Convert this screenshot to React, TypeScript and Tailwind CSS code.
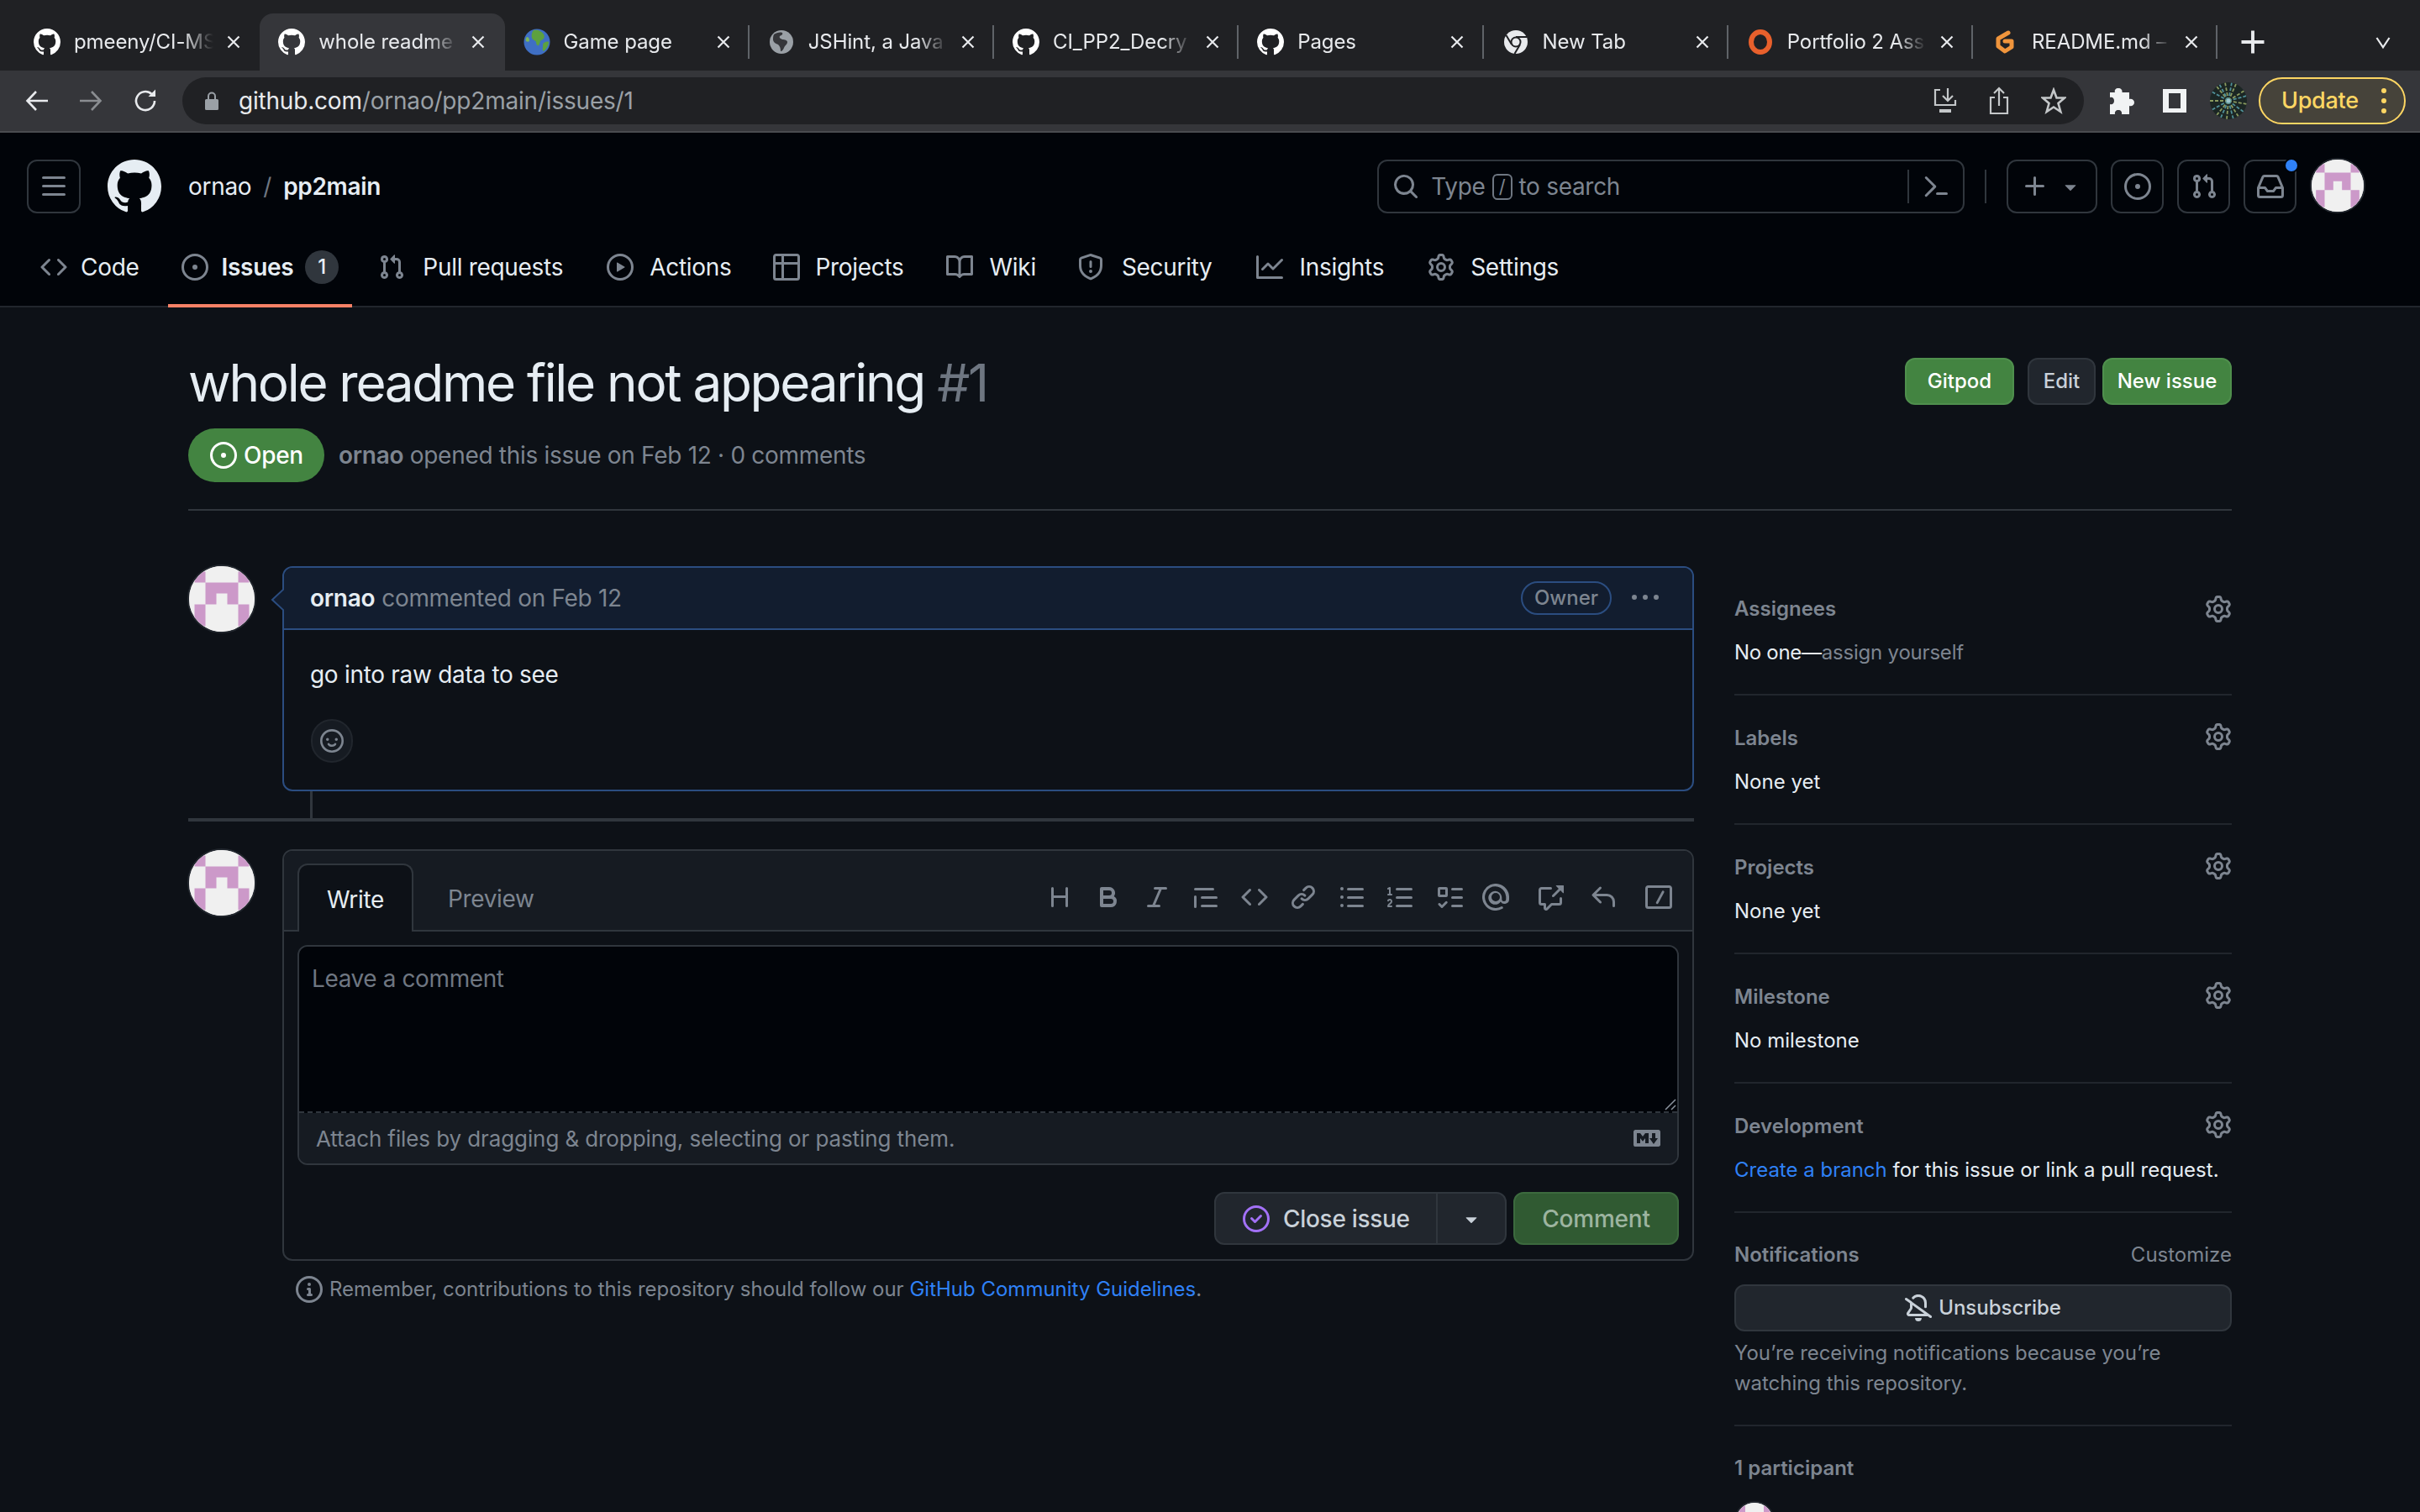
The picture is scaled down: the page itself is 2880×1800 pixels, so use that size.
import React from 'react';

// octicon paths, all on a 16x16 box
const paths: Record<string, string> = {
  github: 'M8 0c4.42 0 8 3.58 8 8a8.013 8.013 0 0 1-5.45 7.59c-.4.08-.55-.17-.55-.38 0-.27.01-1.13.01-2.2 0-.75-.25-1.23-.54-1.48 1.78-.2 3.65-.88 3.65-3.95 0-.88-.31-1.59-.82-2.15.08-.2.36-1.02-.08-2.12 0 0-.67-.22-2.2.82-.64-.18-1.32-.27-2-.27-.68 0-1.36.09-2 .27-1.53-1.03-2.2-.82-2.2-.82-.44 1.1-.16 1.92-.08 2.12-.51.56-.82 1.28-.82 2.15 0 3.06 1.86 3.75 3.64 3.95-.23.2-.44.55-.51 1.07-.46.21-1.61.55-2.33-.66-.15-.24-.6-.83-1.23-.82-.67.01-.27.38.01.53.34.19.73.9.82 1.13.16.45.68 1.31 2.69.94 0 .67.01 1.3.01 1.49 0 .21-.15.45-.55.38A7.995 7.995 0 0 1 0 8c0-4.42 3.58-8 8-8Z',
  code: 'm11.28 3.22 4.25 4.25a.75.75 0 0 1 0 1.06l-4.25 4.25a.749.749 0 0 1-1.275-.326.749.749 0 0 1 .215-.734L13.94 8l-3.72-3.72a.749.749 0 0 1 .326-1.275.749.749 0 0 1 .734.215Zm-6.56 0a.751.751 0 0 1 1.042.018.751.751 0 0 1 .018 1.042L2.06 8l3.72 3.72a.749.749 0 0 1-.326 1.275.749.749 0 0 1-.734-.215L.47 8.53a.75.75 0 0 1 0-1.06Z',
  issue: 'M8 9.5a1.5 1.5 0 1 0 0-3 1.5 1.5 0 0 0 0 3ZM8 0a8 8 0 1 1 0 16A8 8 0 0 1 8 0ZM1.5 8a6.5 6.5 0 1 0 13 0 6.5 6.5 0 0 0-13 0Z',
  pull: 'M1.5 3.25a2.25 2.25 0 1 1 3 2.122v5.256a2.251 2.251 0 1 1-1.5 0V5.372A2.25 2.25 0 0 1 1.5 3.25Zm5.677-.177L9.573.677A.25.25 0 0 1 10 .854V2.5h1A2.5 2.5 0 0 1 13.5 5v5.628a2.251 2.251 0 1 1-1.5 0V5a1 1 0 0 0-1-1h-1v1.646a.25.25 0 0 1-.427.177L7.177 3.427a.25.25 0 0 1 0-.354ZM3.75 2.5a.75.75 0 1 0 0 1.5.75.75 0 0 0 0-1.5Zm0 9.5a.75.75 0 1 0 0 1.5.75.75 0 0 0 0-1.5Zm8.25.75a.75.75 0 1 0 1.5 0 .75.75 0 0 0-1.5 0Z',
  play: 'M8 0a8 8 0 1 1 0 16A8 8 0 0 1 8 0ZM1.5 8a6.5 6.5 0 1 0 13 0 6.5 6.5 0 0 0-13 0Zm4.879-2.773 4.264 2.559a.25.25 0 0 1 0 .428l-4.264 2.559A.25.25 0 0 1 6 10.559V5.442a.25.25 0 0 1 .379-.215Z',
  table: 'M0 1.75C0 .784.784 0 1.75 0h12.5C15.216 0 16 .784 16 1.75v12.5A1.75 1.75 0 0 1 14.25 16H1.75A1.75 1.75 0 0 1 0 14.25ZM6.5 6.5v8h7.75a.25.25 0 0 0 .25-.25V6.5Zm8-1.5V1.75a.25.25 0 0 0-.25-.25H6.5V5Zm-13 1.5v7.75c0 .138.112.25.25.25H5v-8ZM5 5V1.5H1.75a.25.25 0 0 0-.25.25V5Z',
  book: 'M0 1.75A.75.75 0 0 1 .75 1h4.253c1.227 0 2.317.59 3 1.501A3.743 3.743 0 0 1 11.006 1h4.245a.75.75 0 0 1 .75.75v10.5a.75.75 0 0 1-.75.75h-4.507a2.25 2.25 0 0 0-1.591.659l-.622.621a.75.75 0 0 1-1.06 0l-.622-.621A2.25 2.25 0 0 0 5.258 13H.75a.75.75 0 0 1-.75-.75Zm7.251 10.324.004-5.073-.002-2.253A2.25 2.25 0 0 0 5.003 2.5H1.5v9h3.757a3.75 3.75 0 0 1 1.994.574ZM8.755 4.75l-.004 7.322a3.752 3.752 0 0 1 1.992-.572H14.5v-9h-3.495a2.25 2.25 0 0 0-2.25 2.25Z',
  shield: 'M7.467.133a1.748 1.748 0 0 1 1.066 0l5.25 1.68A1.75 1.75 0 0 1 15 3.48V7c0 1.566-.32 3.182-1.303 4.682-.983 1.498-2.585 2.813-5.032 3.855a1.697 1.697 0 0 1-1.33 0c-2.447-1.042-4.049-2.357-5.032-3.855C1.32 10.182 1 8.566 1 7V3.48a1.75 1.75 0 0 1 1.217-1.667Zm.61 1.429a.25.25 0 0 0-.153 0l-5.25 1.68a.25.25 0 0 0-.174.238V7c0 1.358.275 2.666 1.057 3.86.784 1.194 2.121 2.34 4.366 3.297a.196.196 0 0 0 .154 0c2.245-.956 3.582-2.104 4.366-3.298C13.225 9.666 13.5 8.36 13.5 7V3.48a.251.251 0 0 0-.174-.237l-5.25-1.68ZM8.75 4.75v3a.75.75 0 0 1-1.5 0v-3a.75.75 0 0 1 1.5 0ZM9 10.5a1 1 0 1 1-2 0 1 1 0 0 1 2 0Z',
  graph: 'M1.5 1.75V13.5h13.75a.75.75 0 0 1 0 1.5H.75a.75.75 0 0 1-.75-.75V1.75a.75.75 0 0 1 1.5 0Zm14.28 2.53-5.25 5.25a.75.75 0 0 1-1.06 0L7 7.06 4.28 9.78a.751.751 0 0 1-1.042-.018.751.751 0 0 1-.018-1.042l3.25-3.25a.75.75 0 0 1 1.06 0L10 7.94l4.72-4.72a.751.751 0 0 1 1.042.018.751.751 0 0 1 .018 1.042Z',
  gear: 'M8 0a8.2 8.2 0 0 1 .701.031C9.444.095 9.99.645 10.16 1.29l.288 1.107c.018.066.079.158.212.224.231.114.454.243.668.386.123.082.233.09.299.071l1.103-.303c.644-.176 1.392.021 1.82.63.27.385.506.792.704 1.218.315.675.111 1.422-.364 1.891l-.814.806c-.049.048-.098.147-.088.294.016.257.016.515 0 .772-.01.147.038.246.088.294l.814.806c.475.469.679 1.216.364 1.891a7.977 7.977 0 0 1-.704 1.217c-.428.61-1.176.807-1.82.63l-1.102-.302c-.067-.019-.177-.011-.3.071a5.909 5.909 0 0 1-.668.386c-.133.066-.194.158-.211.224l-.29 1.106c-.168.646-.715 1.196-1.458 1.26a8.006 8.006 0 0 1-1.402 0c-.743-.064-1.289-.614-1.458-1.26l-.289-1.106c-.018-.066-.079-.158-.212-.224a5.738 5.738 0 0 1-.668-.386c-.123-.082-.233-.09-.299-.071l-1.103.303c-.644.176-1.392-.021-1.82-.63a8.12 8.12 0 0 1-.704-1.218c-.315-.675-.111-1.422.363-1.891l.815-.806c.05-.048.098-.147.088-.294a6.214 6.214 0 0 1 0-.772c.01-.147-.038-.246-.088-.294l-.815-.806C.635 6.045.431 5.298.746 4.623a7.92 7.92 0 0 1 .704-1.217c.428-.61 1.176-.807 1.82-.63l1.102.302c.067.019.177.011.3-.071.214-.143.437-.272.668-.386.133-.066.194-.158.211-.224l.29-1.106C6.009.645 6.556.095 7.299.03 7.53.01 7.764 0 8 0Zm-.571 1.525c-.036.003-.108.036-.137.146l-.289 1.105c-.147.561-.549.967-.998 1.189-.173.086-.34.183-.5.29-.417.278-.97.423-1.529.27l-1.103-.303c-.109-.03-.175.016-.195.045-.22.312-.412.644-.573.99-.014.031-.021.11.059.19l.815.806c.411.406.562.957.53 1.456a4.709 4.709 0 0 0 0 .582c.032.499-.119 1.05-.53 1.456l-.815.806c-.081.08-.073.159-.059.19.162.346.353.677.573.989.02.03.085.076.195.046l1.102-.303c.56-.153 1.113-.008 1.53.27.161.107.328.204.501.29.447.222.85.629.997 1.189l.289 1.105c.029.109.101.143.137.146a6.6 6.6 0 0 0 1.142 0c.036-.003.108-.036.137-.146l.289-1.105c.147-.561.549-.967.998-1.189.173-.086.34-.183.5-.29.417-.278.97-.423 1.529-.27l1.103.303c.109.029.175-.016.195-.045.22-.313.411-.644.573-.99.014-.031.021-.11-.059-.19l-.815-.806c-.411-.406-.562-.957-.53-1.456a4.709 4.709 0 0 0 0-.582c-.032-.499.119-1.05.53-1.456l.815-.806c.081-.08.073-.159.059-.19a6.464 6.464 0 0 0-.573-.989c-.02-.03-.085-.076-.195-.046l-1.102.303c-.56.153-1.113.008-1.53-.27a4.44 4.44 0 0 0-.501-.29c-.447-.222-.85-.629-.997-1.189l-.289-1.105c-.029-.11-.101-.143-.137-.146a6.6 6.6 0 0 0-1.142 0ZM11 8a3 3 0 1 1-6 0 3 3 0 0 1 6 0ZM9.5 8a1.5 1.5 0 1 0-3.001.001A1.5 1.5 0 0 0 9.5 8Z',
  bars: 'M1 2.75A.75.75 0 0 1 1.75 2h12.5a.75.75 0 0 1 0 1.5H1.75A.75.75 0 0 1 1 2.75Zm0 5A.75.75 0 0 1 1.75 7h12.5a.75.75 0 0 1 0 1.5H1.75A.75.75 0 0 1 1 7.75ZM1.75 12h12.5a.75.75 0 0 1 0 1.5H1.75a.75.75 0 0 1 0-1.5Z',
  search: 'M10.68 11.74a6 6 0 0 1-7.922-8.982 6 6 0 0 1 8.982 7.922l3.04 3.04a.749.749 0 0 1-.326 1.275.749.749 0 0 1-.734-.215ZM11.5 7a4.499 4.499 0 1 0-8.997 0A4.499 4.499 0 0 0 11.5 7Z',
  palette: 'm6.354 8.04-4.773 4.773a.75.75 0 1 0 1.061 1.06L7.945 8.57a.75.75 0 0 0 0-1.06L2.642 2.206a.75.75 0 0 0-1.06 1.061L6.353 8.04ZM8.75 11.5a.75.75 0 0 0 0 1.5h5.5a.75.75 0 0 0 0-1.5h-5.5Z',
  plus: 'M7.75 2a.75.75 0 0 1 .75.75V7h4.25a.75.75 0 0 1 0 1.5H8.5v4.25a.75.75 0 0 1-1.5 0V8.5H2.75a.75.75 0 0 1 0-1.5H7V2.75A.75.75 0 0 1 7.75 2Z',
  caret: 'm4.427 7.427 3.396 3.396a.25.25 0 0 0 .354 0l3.396-3.396A.25.25 0 0 0 11.396 7H4.604a.25.25 0 0 0-.177.427Z',
  inbox: 'M2.8 2.06A1.75 1.75 0 0 1 4.41 1h7.18c.7 0 1.333.417 1.61 1.06l2.74 6.395c.04.093.06.194.06.295v4.5A1.75 1.75 0 0 1 14.25 15H1.75A1.75 1.75 0 0 1 0 13.25v-4.5c0-.101.02-.202.06-.295Zm1.61.44a.25.25 0 0 0-.23.152L1.887 8H4.75a.75.75 0 0 1 .6.3L6.625 10h2.75l1.275-1.7a.75.75 0 0 1 .6-.3h2.863L11.82 2.652a.25.25 0 0 0-.23-.152Zm10.09 7h-2.875l-1.275 1.7a.75.75 0 0 1-.6.3h-3.5a.75.75 0 0 1-.6-.3L4.375 9.5H1.5v3.75c0 .138.112.25.25.25h12.5a.25.25 0 0 0 .25-.25Z',
  kebab: 'M8 9a1.5 1.5 0 1 0 0-3 1.5 1.5 0 0 0 0 3ZM1.5 9a1.5 1.5 0 1 0 0-3 1.5 1.5 0 0 0 0 3Zm13 0a1.5 1.5 0 1 0 0-3 1.5 1.5 0 0 0 0 3Z',
  smiley: 'M8 0a8 8 0 1 1 0 16A8 8 0 0 1 8 0ZM1.5 8a6.5 6.5 0 1 0 13 0 6.5 6.5 0 0 0-13 0Zm3.82 1.636a.75.75 0 0 1 1.038.175l.007.009c.103.118.22.222.35.31.264.178.683.37 1.285.37.602 0 1.02-.192 1.285-.371.13-.088.247-.192.35-.31l.007-.008a.75.75 0 0 1 1.222.87l-.022-.015c.02.013.021.015.021.015v.001l-.001.002-.002.003-.005.007-.014.019a2.066 2.066 0 0 1-.184.213c-.16.166-.338.316-.53.445-.63.418-1.37.638-2.127.629-.946 0-1.652-.308-2.126-.63a3.331 3.331 0 0 1-.715-.657l-.014-.02-.005-.006-.002-.003v-.002h-.001l.613-.432-.614.43a.75.75 0 0 1 .183-1.044ZM12 7a1 1 0 1 1-2 0 1 1 0 0 1 2 0ZM5 8a1 1 0 1 1 0-2 1 1 0 0 1 0 2Z',
  heading: 'M3.75 2a.75.75 0 0 1 .75.75V7h7V2.75a.75.75 0 0 1 1.5 0v10.5a.75.75 0 0 1-1.5 0V8.5h-7v4.75a.75.75 0 0 1-1.5 0V2.75A.75.75 0 0 1 3.75 2Z',
  bold: 'M4 2h4.5a3.501 3.501 0 0 1 2.852 5.53A3.499 3.499 0 0 1 9.5 14H4a1 1 0 0 1-1-1V3a1 1 0 0 1 1-1Zm1 7v3h4.5a1.5 1.5 0 0 0 0-3Zm3.5-2a1.5 1.5 0 0 0 0-3H5v3Z',
  italic: 'M6 2.75A.75.75 0 0 1 6.75 2h6.5a.75.75 0 0 1 0 1.5h-2.505l-3.858 9H9.25a.75.75 0 0 1 0 1.5h-6.5a.75.75 0 0 1 0-1.5h2.505l3.858-9H6.75A.75.75 0 0 1 6 2.75Z',
  quote: 'M1.75 2.5h10.5a.75.75 0 0 1 0 1.5H1.75a.75.75 0 0 1 0-1.5Zm4 5h8.5a.75.75 0 0 1 0 1.5h-8.5a.75.75 0 0 1 0-1.5Zm0 5h8.5a.75.75 0 0 1 0 1.5h-8.5a.75.75 0 0 1 0-1.5ZM2.5 7.75v6a.75.75 0 0 1-1.5 0v-6a.75.75 0 0 1 1.5 0Z',
  link: 'm7.775 3.275 1.25-1.25a3.5 3.5 0 1 1 4.95 4.95l-2.5 2.5a3.5 3.5 0 0 1-4.95 0 .751.751 0 0 1 .018-1.042.751.751 0 0 1 1.042-.018 1.998 1.998 0 0 0 2.83 0l2.5-2.5a2.002 2.002 0 0 0-2.83-2.83l-1.25 1.25a.751.751 0 0 1-1.042-.018.751.751 0 0 1-.018-1.042Zm-4.69 9.64a1.998 1.998 0 0 0 2.83 0l1.25-1.25a.751.751 0 0 1 1.042.018.751.751 0 0 1 .018 1.042l-1.25 1.25a3.5 3.5 0 1 1-4.95-4.95l2.5-2.5a3.5 3.5 0 0 1 4.95 0 .751.751 0 0 1-.018 1.042.751.751 0 0 1-1.042.018 1.998 1.998 0 0 0-2.83 0l-2.5 2.5a1.998 1.998 0 0 0 0 2.83Z',
  ul: 'M5.75 2.5h8.5a.75.75 0 0 1 0 1.5h-8.5a.75.75 0 0 1 0-1.5Zm0 5h8.5a.75.75 0 0 1 0 1.5h-8.5a.75.75 0 0 1 0-1.5Zm0 5h8.5a.75.75 0 0 1 0 1.5h-8.5a.75.75 0 0 1 0-1.5ZM2 14a1 1 0 1 1 0-2 1 1 0 0 1 0 2Zm1-6a1 1 0 1 1-2 0 1 1 0 0 1 2 0ZM2 4a1 1 0 1 1 0-2 1 1 0 0 1 0 2Z',
  ol: 'M5 3.25a.75.75 0 0 1 .75-.75h8.5a.75.75 0 0 1 0 1.5h-8.5A.75.75 0 0 1 5 3.25Zm0 5a.75.75 0 0 1 .75-.75h8.5a.75.75 0 0 1 0 1.5h-8.5A.75.75 0 0 1 5 8.25Zm0 5a.75.75 0 0 1 .75-.75h8.5a.75.75 0 0 1 0 1.5h-8.5a.75.75 0 0 1-.75-.75ZM.924 10.32a.5.5 0 0 1-.851-.525l.001-.001.001-.002.002-.004.007-.011c.097-.144.215-.273.348-.384.228-.19.588-.392 1.068-.392.468 0 .858.181 1.126.484.259.294.377.673.377 1.038 0 .987-.686 1.495-1.156 1.845l-.047.035c-.303.225-.522.4-.654.597h1.357a.5.5 0 0 1 0 1H.5a.5.5 0 0 1-.5-.5c0-1.005.692-1.52 1.167-1.875l.035-.025c.531-.396.8-.625.8-1.078a.57.57 0 0 0-.128-.376C1.806 10.068 1.695 10 1.5 10a.658.658 0 0 0-.429.163.835.835 0 0 0-.144.153ZM2.003 2.5V6h.503a.5.5 0 0 1 0 1H.5a.5.5 0 0 1 0-1h.503V3.308l-.28.14a.5.5 0 0 1-.446-.895l1.003-.5a.5.5 0 0 1 .723.447Z',
  task: 'M2 2h4a1 1 0 0 1 1 1v4a1 1 0 0 1-1 1H2a1 1 0 0 1-1-1V3a1 1 0 0 1 1-1Zm4.655 8.595a.75.75 0 0 1 0 1.06L4.03 14.28a.75.75 0 0 1-1.06 0l-1.5-1.5a.749.749 0 0 1 .326-1.275.749.749 0 0 1 .734.215l.97.97 2.095-2.095a.75.75 0 0 1 1.06 0ZM9.75 2.5h5.5a.75.75 0 0 1 0 1.5h-5.5a.75.75 0 0 1 0-1.5Zm0 5h5.5a.75.75 0 0 1 0 1.5h-5.5a.75.75 0 0 1 0-1.5Zm0 5h5.5a.75.75 0 0 1 0 1.5h-5.5a.75.75 0 0 1 0-1.5Zm-7.25-9v3h3v-3Z',
  mention: 'M4.75 2.37a6.501 6.501 0 0 0 6.5 11.26.75.75 0 0 1 .75 1.298A7.999 7.999 0 0 1 .989 4.148 8 8 0 0 1 16 7.75v1.5a2.75 2.75 0 0 1-5.072 1.475 3.999 3.999 0 1 1 .72-2.17l.002.695a1.25 1.25 0 1 0 2.5 0V7.75a6.5 6.5 0 0 0-9.4-5.38ZM10.5 8a2.5 2.5 0 1 0-5 0 2.5 2.5 0 0 0 5 0Z',
  crossref: 'M2.75 3.5a.25.25 0 0 0-.25.25v7.5c0 .138.112.25.25.25h2a.75.75 0 0 1 .75.75v2.19l2.72-2.72a.749.749 0 0 1 .53-.22h4.5a.25.25 0 0 0 .25-.25v-2.5a.75.75 0 0 1 1.5 0v2.5A1.75 1.75 0 0 1 13.25 13H9.06l-2.573 2.573A1.458 1.458 0 0 1 4 14.543V13H2.75A1.75 1.75 0 0 1 1 11.25v-7.5C1 2.784 1.784 2 2.75 2h5.5a.75.75 0 0 1 0 1.5ZM16 1.25v4.146a.25.25 0 0 1-.427.177L14.03 4.03l-3.75 3.75a.749.749 0 0 1-1.275-.326.749.749 0 0 1 .215-.734l3.75-3.75-1.543-1.543A.25.25 0 0 1 11.604 1h4.146a.25.25 0 0 1 .25.25Z',
  reply: 'M6.78 1.97a.75.75 0 0 1 0 1.06L3.81 6h6.44A4.75 4.75 0 0 1 15 10.75v2.5a.75.75 0 0 1-1.5 0v-2.5a3.25 3.25 0 0 0-3.25-3.25H3.81l2.97 2.97a.749.749 0 0 1-.326 1.275.749.749 0 0 1-.734-.215L1.47 7.28a.75.75 0 0 1 0-1.06l4.25-4.25a.75.75 0 0 1 1.06 0Z',
  slash: 'M1.75 1h12.5c.966 0 1.75.784 1.75 1.75v10.5A1.75 1.75 0 0 1 14.25 15H1.75A1.75 1.75 0 0 1 0 13.25V2.75C0 1.784.784 1 1.75 1ZM1.5 2.75v10.5c0 .138.112.25.25.25h12.5a.25.25 0 0 0 .25-.25V2.75a.25.25 0 0 0-.25-.25H1.75a.25.25 0 0 0-.25.25ZM10.9 4.3a.75.75 0 0 1 .3 1l-3.5 6.5a.75.75 0 0 1-1.3-.7l3.5-6.5a.75.75 0 0 1 1-.3Z',
  info: 'M0 8a8 8 0 1 1 16 0A8 8 0 0 1 0 8Zm8-6.5a6.5 6.5 0 1 0 0 13 6.5 6.5 0 0 0 0-13ZM6.5 7.75A.75.75 0 0 1 7.25 7h1a.75.75 0 0 1 .75.75v2.75h.25a.75.75 0 0 1 0 1.5h-2a.75.75 0 0 1 0-1.5h.25v-2h-.25a.75.75 0 0 1-.75-.75ZM8 6a1 1 0 1 1 0-2 1 1 0 0 1 0 2Z',
  closed: 'M11.28 6.78a.75.75 0 0 0-1.06-1.06L7.25 8.69 5.78 7.22a.75.75 0 0 0-1.06 1.06l2 2a.75.75 0 0 0 1.06 0l3.5-3.5ZM16 8A8 8 0 1 1 0 8a8 8 0 0 1 16 0Zm-1.5 0a6.5 6.5 0 1 0-13 0 6.5 6.5 0 0 0 13 0Z',
  markdown: 'M14.85 3c.63 0 1.15.52 1.14 1.15v7.7c0 .63-.51 1.15-1.15 1.15H1.15C.52 13 0 12.48 0 11.84V4.15C0 3.52.52 3 1.15 3ZM9 11V5H7L5.5 7 4 5H2v6h2V8l1.5 1.92L7 8v3Zm2.99.5L14.5 8H13V5h-2v3H9.5Z',
  bellSlash: 'm4.182 4.31.016.011 10.104 7.316.013.01 1.375.996a.75.75 0 1 1-.88 1.214L13.626 13H2.518a1.516 1.516 0 0 1-1.263-2.36l1.703-2.554A.255.255 0 0 0 3 7.947V5.305L.31 3.357a.75.75 0 1 1 .88-1.214Zm7.373 7.19L4.5 6.391v1.556c0 .346-.102.683-.294.97l-1.703 2.556a.017.017 0 0 0-.003.01c0 .005.002.009.005.012l.006.004.007.001ZM8 1.5c-.997 0-1.895.416-2.534 1.086A.75.75 0 1 1 4.38 1.55 5 5 0 0 1 13 5v2.373a.75.75 0 0 1-1.5 0V5A3.5 3.5 0 0 0 8 1.5ZM8 16a2 2 0 0 1-1.985-1.75c-.017-.137.097-.25.235-.25h3.5c.138 0 .252.113.235.25A2 2 0 0 1 8 16Z',
};

const Oct = ({ name, className = 'w-8 h-8 text-[#7d8590]' }: { name: string; className?: string }) => (
  <svg viewBox="0 0 16 16" fill="currentColor" className={`shrink-0 ${className}`}>
    <path fillRule="evenodd" d={paths[name]} />
  </svg>
);

const Identicon = ({ className = 'w-[82px] h-[82px]' }: { className?: string }) => (
  <div className={`shrink-0 rounded-full overflow-hidden border-2 border-[#21262d] bg-[#f0f0f0] ${className}`}>
    <svg viewBox="0 0 6 6" className="w-full h-full block">
      <rect width="6" height="6" fill="#f0f0f0" />
      <path
        fill="#cc99c9"
        d="M.5.5h1v1h-1ZM4.5.5h1v1h-1ZM1.5 1.5h3v1h-3ZM1.5 2.5h1v1h-1ZM3.5 2.5h1v1h-1ZM.5 3.5h1v2h-1ZM4.5 3.5h1v2h-1Z"
      />
    </svg>
  </div>
);

const GithubFav = () => <Oct name="github" className="w-8 h-8 text-white" />;

const EarthFav = () => (
  <svg viewBox="0 0 32 32" className="w-8 h-8 shrink-0">
    <circle cx="16" cy="16" r="15.5" fill="#3f6fc4" />
    <path d="M12 2c5-1 10 1 12 5 2 3 0 6-3 7-2 1-1 4-3 6-2 1-3-2-3-4-1-2-4-2-5-5-1-3 0-7 2-9Z" fill="#5da13f" />
    <path d="M24 17c2-1 5-2 6-1 0 4-3 9-6 11-2-1-1-4-1-6 0-2 0-3 1-4Z" fill="#5da13f" />
    <path d="M4 10c2 0 3 2 3 4s-2 2-4 1c-1-2 0-4 1-5Z" fill="#7cb55a" />
  </svg>
);

const GlobeFav = () => (
  <svg viewBox="0 0 32 32" className="w-8 h-8 shrink-0">
    <circle cx="16" cy="16" r="14" fill="#9aa0a6" />
    <path d="M7 7c3-2 7-3 10-2 1 2-1 3-3 4-1 2 1 3 3 4 3 0 6 1 6 3 0 3-3 4-4 7-1 2-2 4-4 4 0-4-1-6-3-8-3-1-6-3-6-6 0-2 0-4 1-6Z" fill="#35363a" />
  </svg>
);

const ChromeFav = () => (
  <svg viewBox="0 0 32 32" className="w-8 h-8 shrink-0">
    <circle cx="16" cy="16" r="14" fill="#e8eaed" />
    <path d="M16 10h13M11 19 4.5 8M21 19l-6.5 11" stroke="#202124" strokeWidth="2" fill="none" />
    <circle cx="16" cy="16" r="6.5" fill="#202124" />
    <circle cx="16" cy="16" r="4.5" fill="#e8eaed" />
  </svg>
);

const PortfolioFav = () => (
  <svg viewBox="0 0 32 32" className="w-8 h-8 shrink-0">
    <ellipse cx="16" cy="16" rx="11" ry="12" fill="none" stroke="#e8602c" strokeWidth="6" />
  </svg>
);

const GitpodFav = () => (
  <svg viewBox="0 0 32 32" className="w-8 h-8 shrink-0">
    <path
      d="M20 5 8 12v9l8 6 8-5v-7h-8"
      fill="none"
      stroke="#f0953c"
      strokeWidth="5"
      strokeLinecap="round"
      strokeLinejoin="round"
    />
  </svg>
);

const tabs = [
  { title: 'pmeeny/CI-MS', fav: <GithubFav /> },
  { title: 'whole readme', fav: <GithubFav />, active: true },
  { title: 'Game page', fav: <EarthFav /> },
  { title: 'JSHint, a Java', fav: <GlobeFav /> },
  { title: 'CI_PP2_Decry', fav: <GithubFav /> },
  { title: 'Pages', fav: <GithubFav /> },
  { title: 'New Tab', fav: <ChromeFav /> },
  { title: 'Portfolio 2 Ass', fav: <PortfolioFav /> },
  { title: 'README.md –', fav: <GitpodFav /> },
];

const navItems = [
  { icon: 'code', label: 'Code', cls: 'gap-4' },
  { icon: 'issue', label: 'Issues', count: 1, active: true, cls: 'ml-[18px] gap-4' },
  { icon: 'pull', label: 'Pull requests', cls: 'ml-[15px] gap-[21px]' },
  { icon: 'play', label: 'Actions', cls: 'ml-5 gap-[19px]' },
  { icon: 'table', label: 'Projects', cls: 'ml-[18px] gap-[18px]' },
  { icon: 'book', label: 'Wiki', cls: 'ml-[18px] gap-5' },
  { icon: 'shield', label: 'Security', cls: 'ml-[17px] gap-[21px]' },
  { icon: 'graph', label: 'Insights', cls: 'ml-5 gap-5' },
  { icon: 'gear', label: 'Settings', cls: 'ml-5 gap-[19px]' },
];

const TabStrip = () => (
  <div className="h-[84px] bg-[#202124] flex items-end pl-[18px]">
    {tabs.map((tab, i) => (
      <div
        key={i}
        className={`relative w-[291.25px] h-[68px] pl-[22px] flex items-center ${
          tab.active ? 'bg-[#35363a] rounded-t-[16px]' : ''
        }`}
      >
        {tab.fav}
        <span className="ml-4 w-[171px] overflow-hidden whitespace-nowrap text-[24px] tracking-[-0.1px] text-[#e8eaed] [mask-image:linear-gradient(to_right,black_76%,transparent_97%)]">
          {tab.title}
        </span>
        <svg viewBox="0 0 16 16" className="ml-[11px] w-4 h-4 shrink-0 text-[#e8eaed]" fill="none" stroke="currentColor" strokeWidth="2.2">
          <path d="M1.500 1.500l13 13M14.500 1.500l-13 13" />
        </svg>
        {i > 1 && <span className="ml-auto w-[2px] h-[40px] bg-[#5f6368]" />}
      </div>
    ))}
    <svg viewBox="0 0 24 24" className="ml-[24px] mb-[16px] w-[36px] h-[36px] text-[#e8eaed]" fill="none" stroke="currentColor" strokeWidth="2.600">
      <path d="M12 3v18M3 12h18" />
    </svg>
    <svg viewBox="0 0 16 16" className="ml-[127px] mb-[24px] w-[20px] h-[20px] text-[#e8eaed]" fill="none" stroke="currentColor" strokeWidth="1.800">
      <path d="M2 4l6 9 6-9" />
    </svg>
  </div>
);

const ToolBar = () => (
  <div className="h-[74px] border-b-2 border-[#4a4c50] bg-[#35363a] flex items-center pl-[30px]">
    <svg viewBox="0 0 28 28" className="w-7 h-7 text-[#e8eaed]" fill="none" stroke="currentColor" strokeWidth="2.600">
      <path d="M27 14H3M13 3 2.500 14 13 25" />
    </svg>
    <svg viewBox="0 0 28 28" className="ml-9 w-7 h-7 text-[#8a8d91]" fill="none" stroke="currentColor" strokeWidth="2.600">
      <path d="M1 14h24M15 3l10.500 11L15 25" />
    </svg>
    <svg viewBox="0 0 30 30" className="ml-9 w-[30px] h-[30px] text-[#e8eaed]" fill="none" stroke="currentColor" strokeWidth="2.600">
      <path d="M26 15a11 11 0 1 1-3.500-8" />
      <path d="M27 1.500V10h-8.500z" fill="currentColor" stroke="none" />
    </svg>
    <div className="ml-[29px] w-[2263px] h-14 rounded-full bg-[#202124] flex items-center pl-[27px]">
      <svg viewBox="0 0 16 22" className="w-4 h-[22px] text-[#9aa0a6]" fill="currentColor">
        <path d="M3 9V5.500a5 5 0 0 1 10 0V9h1.500a1.500 1.500 0 0 1 1.500 1.500v10a1.500 1.500 0 0 1-1.500 1.500h-13A1.500 1.500 0 0 1 0 20.500v-10A1.500 1.500 0 0 1 1.500 9Zm2 0h6V5.500a3 3 0 0 0-6 0Z" />
      </svg>
      <span className="ml-[24px] text-[28px] tracking-[-0.2px] text-[#e8eaed]">
        github.com<span className="text-[#9aa0a6]">/ornao/pp2main/issues/1</span>
      </span>
      <svg viewBox="0 0 28 32" className="ml-auto w-7 h-8 text-[#c4c7c9]" fill="none" stroke="currentColor" strokeWidth="2.200">
        <path d="M8 3H2v18h24v-6M17 1v15M11 10l6 6 6-6" />
        <path d="M7 26h14v4H7z" fill="currentColor" stroke="none" />
      </svg>
      <svg viewBox="0 0 24 34" className="ml-[38px] w-6 h-[34px] text-[#c4c7c9]" fill="none" stroke="currentColor" strokeWidth="2.200">
        <path d="M7 13H2v19h20V13h-5M12 23V2M6 8l6-6 6 6" />
      </svg>
      <svg viewBox="0 0 30 32" className="ml-[38px] mr-[21px] w-[30px] h-8 text-[#c4c7c9]" fill="none" stroke="currentColor" strokeWidth="2.600">
        <path d="m15 3 3.500 9.500H28l-7.500 6.500 2.800 10L15 23.500 6.700 29l2.800-10L2 12.500h9.500Z" />
      </svg>
    </div>
    <svg viewBox="0 0 30 32" className="ml-[30px] w-[30px] h-8 text-[#f1f3f4]" fill="currentColor">
      <path d="M11 1c3 0 5 2 4.500 5H24v8c3-1 6 1 6 4s-3 5-6 4v10H15c.5-3-1-5-4-5s-4.500 2-4 5H1V20c3 1 5-1 5-4s-2-5-5-4V6h6C6 3 8 1 11 1Z" />
    </svg>
    <div className="ml-[34px] w-[28px] h-[28px] border-y-[5px] border-x-[7px] border-[#f1f3f4] bg-[#35363a]" />
    <div className="ml-[28px] w-[44px] h-[44px] rounded-full overflow-hidden">
      <svg viewBox="0 0 44 44" className="w-full h-full">
        <rect width="44" height="44" fill="#1b2624" />
        <g strokeDasharray="4 2">
          <path d="M22 22 4 0M22 22 18 0M22 22 32 0M22 22 44 8M22 22 44 26M22 22 36 44M22 22 20 44M22 22 4 44M22 22 0 22" stroke="#8a9a5f" strokeWidth="1.800" />
          <path d="M22 22 10 0M22 22 26 0M22 22 44 16M22 22 44 38M22 22 0 34M22 22 0 10M22 22 28 44M22 22 12 44" stroke="#4f8f98" strokeWidth="1.800" />
        </g>
        <circle cx="22" cy="22" r="2.500" fill="#9cc4cc" />
      </svg>
    </div>
    <div className="ml-[14px] w-[175px] h-14 rounded-full border-2 border-[#fdd663] bg-[#46433a] flex items-center pl-[25px]">
      <span className="text-[27px] font-medium tracking-[-0.3px] text-[#fdd663]">Update</span>
      <span className="ml-auto mr-[21px] flex flex-col gap-[6px]">
        <span className="w-[6px] h-[6px] rounded-full bg-[#fdd663]" />
        <span className="w-[6px] h-[6px] rounded-full bg-[#fdd663]" />
        <span className="w-[6px] h-[6px] rounded-full bg-[#fdd663]" />
      </span>
    </div>
  </div>
);

const HeaderButton = ({ children, className }: { children: React.ReactNode; className: string }) => (
  <div className={`h-16 shrink-0 rounded-[12px] border-2 border-[#30363d] flex items-center justify-center ${className}`}>
    {children}
  </div>
);

const RepoHeader = () => (
  <header className="h-[208px] bg-[#010409]">
    <div className="h-[114px] pt-8 pl-8 flex items-start">
      <HeaderButton className="w-16">
        <Oct name="bars" className="w-8 h-8 text-[#7d8590]" />
      </HeaderButton>
      <Oct name="github" className="ml-8 w-16 h-16 text-[#e6edf3]" />
      <div className="ml-8 h-16 flex items-center text-[28px] tracking-[-0.3px] text-[#e6edf3]">
        <span>ornao</span>
        <span className="mx-[14px] text-[#6e7681]">/</span>
        <span className="font-semibold">pp2main</span>
      </div>
      <div className="ml-[1186px] w-[699px] h-16 rounded-[12px] border-2 border-[#30363d] flex items-center pl-4 pr-4 text-[28px] tracking-[-0.3px] text-[#7d8590]">
        <Oct name="search" className="w-8 h-8 text-[#7d8590]" />
        <span className="ml-[14px]">Type</span>
        <span className="ml-2 w-[24px] h-[31px] rounded-[6px] border-2 border-[#6e7681] text-[22px] leading-[27px] text-center">/</span>
        <span className="ml-2">to search</span>
        <span className="ml-auto w-[2px] h-[40px] bg-[#30363d]" />
        <Oct name="palette" className="ml-4 w-8 h-8 text-[#7d8590]" />
      </div>
      <span className="ml-6 mt-3 w-[2px] h-[40px] bg-[#30363d]" />
      <HeaderButton className="ml-[24px] w-[108px] gap-3">
        <Oct name="plus" className="w-8 h-8 text-[#7d8590]" />
        <Oct name="caret" className="w-7 h-7 text-[#7d8590]" />
      </HeaderButton>
      <HeaderButton className="ml-4 w-[63px]">
        <Oct name="issue" />
      </HeaderButton>
      <HeaderButton className="ml-4 w-[63px]">
        <Oct name="pull" />
      </HeaderButton>
      <div className="relative ml-4">
        <HeaderButton className="w-[63px]">
          <Oct name="inbox" />
        </HeaderButton>
        <span className="absolute -top-[2px] -right-[3px] w-[18px] h-[18px] rounded-full bg-[#2f81f7] border-2 border-[#010409]" />
      </div>
      <Identicon className="ml-[16px] -mt-[2px] w-[66px] h-[66px]" />
    </div>
    <nav className="h-[94px] border-b-2 border-[#21262d] pl-8 flex">
      {navItems.map(item => (
        <div
          key={item.label}
          className={`h-[94px] pt-[2px] px-4 flex items-center border-b-4 ${item.cls} ${
            item.active ? 'border-[#f78166]' : 'border-transparent'
          }`}
        >
          <Oct name={item.icon} />
          <span className={`text-[28px] tracking-[-0.3px] text-[#e6edf3] ${item.active ? 'font-semibold' : ''}`}>{item.label}</span>
          {item.count && (
            <span className="-ml-[2px] w-10 h-10 rounded-full bg-[#30363d] flex items-center justify-center text-[24px] font-medium text-[#e6edf3]">
              {item.count}
            </span>
          )}
        </div>
      ))}
    </nav>
  </header>
);

const PageButton = ({ label, green, className }: { label: string; green?: boolean; className: string }) => (
  <div
    className={`h-14 rounded-[12px] border-2 flex items-center justify-center text-[24px] font-medium ${
      green ? 'bg-[#438441] border-[#4f8f4d] text-white' : 'bg-[#21262d] border-[#30363d] text-[#c9d1d9]'
    } ${className}`}
  >
    {label}
  </div>
);

const TitleBlock = () => (
  <div className="pt-[48px] pb-[32px] border-b-2 border-[#30363d]">
    <div className="flex items-start">
      <h1 className="h-20 text-[62px] leading-[84px] font-normal text-[#e6edf3] tracking-[-2.3px]">
        whole readme file not appearing <span className="text-[#6e7681]">#1</span>
      </h1>
      <div className="ml-auto mt-3 flex">
        <PageButton label="Gitpod" green className="w-[130px]" />
        <PageButton label="Edit" className="ml-4 w-[81px]" />
        <PageButton label="New issue" green className="ml-2 w-[154px]" />
      </div>
    </div>
    <div className="mt-4 flex items-center">
      <div className="w-[162px] h-16 rounded-full bg-[#438441] flex items-center pl-[26px] gap-2 text-[28px] tracking-[-0.3px] font-medium text-white">
        <Oct name="issue" className="w-8 h-8 text-white" />
        Open
      </div>
      <p className="ml-[17px] text-[28px] tracking-[-0.3px] text-[#7d8590]">
        <span className="font-semibold">ornao</span> opened this issue on Feb 12 · 0 comments
      </p>
    </div>
  </div>
);

const Comment = () => (
  <div className="flex items-start -ml-px">
    <Identicon />
    <div className="relative ml-[31px] mt-[2px] w-[1680px] h-[268px] rounded-[12px] border-2 border-[#2b4d80]">
      {/* little pointer towards the avatar */}
      <svg viewBox="0 0 16 28" className="absolute left-[-16px] top-[24px] w-4 h-7">
        <path d="M16 1 2 14l14 13" fill="#121d2f" stroke="#2b4d80" strokeWidth="2" />
      </svg>
      <div className="h-[74px] rounded-t-[10px] border-b-2 border-[#2b4d80] bg-[#121d2f] flex items-center pl-[31px] pr-[40px] text-[28px] tracking-[-0.3px] text-[#7d8590]">
        <span className="font-semibold text-[#e6edf3]">ornao</span>
        <span className="ml-2">commented on Feb 12</span>
        <span className="ml-auto w-[108px] h-10 rounded-full border-2 border-[#2b4d80] flex items-center justify-center text-[24px] tracking-normal font-medium">
          Owner
        </span>
        <Oct name="kebab" className="ml-[24px] w-[32px] h-8 text-[#7d8590]" />
      </div>
      <p className="pl-[31px] mt-[33px] h-[40px] leading-[40px] text-[28px] tracking-[-0.3px] text-[#e6edf3]">go into raw data to see</p>
      <div className="ml-[32px] mt-[33px] w-[50px] h-[52px] rounded-full border-2 border-[#21262d] bg-[#161b22] flex items-center justify-center">
        <Oct name="smiley" className="w-7 h-7 text-[#7d8590]" />
      </div>
    </div>
  </div>
);

const Editor = () => (
  <div className="mt-[32px] flex items-start -ml-px">
    <Identicon />
    <div className="ml-[31px] mt-px w-[1680px] h-[490px] rounded-[12px] border-2 border-[#30363d]">
      <div className="h-[96px] rounded-t-[10px] border-b-2 border-[#30363d] bg-[#161b22] flex items-end pl-4 pr-6">
        <div className="-mb-[2px] w-[138px] h-[81px] pt-[2px] rounded-t-[12px] border-2 border-b-0 border-[#30363d] bg-[#0d1117] flex items-center justify-center text-[28px] tracking-[-0.3px] text-[#e6edf3]">
          Write
        </div>
        <span className="ml-[41px] mb-[16px] text-[28px] tracking-[-0.35px] text-[#7d8590]">Preview</span>
        <div className="ml-auto mb-[23px] flex">
          <div className="flex gap-[26px]">
            {['heading', 'bold', 'italic', 'quote', 'code', 'link', 'ul', 'ol', 'task'].map(n => (
              <Oct key={n} name={n} />
            ))}
          </div>
          <Oct name="mention" className="ml-[23px] w-8 h-8 text-[#7d8590]" />
          <Oct name="crossref" className="ml-[33px] w-8 h-8 text-[#7d8590]" />
          <Oct name="reply" className="ml-[31px] w-8 h-8 text-[#7d8590]" />
          <Oct name="slash" className="ml-[34px] w-8 h-8 text-[#7d8590]" />
        </div>
      </div>
      <div className="mx-4 mt-4 h-[262px] rounded-[12px] border-2 border-[#30363d] overflow-hidden">
        <div className="relative h-[198px] border-b-2 border-dashed border-[#30363d] bg-[#010409] pl-[15px] pt-[18px] text-[28px] leading-[40px] tracking-[-0.4px] text-[#6e7681]">
          Leave a comment
          <svg viewBox="0 0 14 14" className="absolute right-[1px] bottom-[1px] w-[14px] h-[14px] text-[#8b949e]" fill="none" stroke="currentColor" strokeWidth="1.500">
            <path d="M13 1 1 13M13 8l-5 5" />
          </svg>
        </div>
        <div className="h-[60px] bg-[#161b22] flex items-center pl-[20px] pr-[20px] text-[26px] tracking-[-0.1px] text-[#7d8590]">
          Attach files by dragging &amp; dropping, selecting or pasting them.
          <Oct name="markdown" className="ml-auto w-8 h-8 text-[#7d8590]" />
        </div>
      </div>
      <div className="mt-[32px] mr-4 flex justify-end">
        <div className="w-[348px] h-[63px] rounded-[12px] border-2 border-[#30363d] bg-[#21262d] flex">
          <div className="w-[264px] border-r-2 border-[#30363d] flex items-center pl-8 gap-4 text-[28px] tracking-[-0.3px] font-medium text-[#c9d1d9]">
            <Oct name="closed" className="w-8 h-8 text-[#a371f7]" />
            Close issue
          </div>
          <div className="flex-1 flex items-center justify-center">
            <Oct name="caret" className="w-7 h-7 text-[#c9d1d9]" />
          </div>
        </div>
        <div className="ml-2 w-[197px] h-[63px] rounded-[12px] border-2 border-[#3c6a3e] bg-[#305a32] flex items-center justify-center text-[28px] tracking-[-0.2px] font-medium text-[#9db4a0]">
          Comment
        </div>
      </div>
    </div>
  </div>
);

const SideSection = ({ title, gearClass = '-mt-1', children }: { title: string; gearClass?: string; children: React.ReactNode }) => (
  <div className="h-[154px] border-b-2 border-[#21262d] pt-[31px]">
    <div className="h-[40px] flex items-center justify-between text-[24px] font-semibold text-[#7d8590]">
      {title}
      <Oct name="gear" className={`w-8 h-8 text-[#7d8590] ${gearClass}`} />
    </div>
    <p className="mt-[12px] h-[40px] leading-[40px] text-[24px] text-[#e6edf3]">{children}</p>
  </div>
);

const Sidebar = () => (
  <aside className="ml-[48px] mt-[2px] w-[592px] shrink-0">
    <SideSection title="Assignees" gearClass="mt-0">
      <span className="tracking-[-0.3px]">No one—</span>
      <span className="tracking-[-0.2px] text-[#7d8590]">assign yourself</span>
    </SideSection>
    <SideSection title="Labels">None yet</SideSection>
    <SideSection title="Projects">None yet</SideSection>
    <SideSection title="Milestone">No milestone</SideSection>
    <SideSection title="Development">
      <span className="text-[#2f81f7]">Create a branch</span> for this issue or link a pull request.
    </SideSection>
    <div className="h-[254px] border-b-2 border-[#21262d] pt-[30px]">
      <div className="h-[40px] flex items-center justify-between text-[24px] text-[#7d8590]">
        <span className="font-semibold">Notifications</span>
        <span>Customize</span>
      </div>
      <div className="mt-[15px] h-14 rounded-[12px] border-2 border-[#30363d] bg-[#21262d] flex items-center justify-center gap-2 text-[24px] font-medium text-[#c9d1d9]">
        <Oct name="bellSlash" className="w-8 h-8 text-[#c9d1d9]" />
        Unsubscribe
      </div>
      <p className="mt-[8px] text-[24px] leading-[36px] tracking-[-0.05px] text-[#7d8590]">
        You’re receiving notifications because you’re watching this repository.
      </p>
    </div>
    <div className="pt-[30px]">
      <div className="h-[40px] flex items-center text-[24px] font-semibold text-[#7d8590]">1 participant</div>
      <Identicon className="mt-[19px] w-[48px] h-[48px]" />
    </div>
  </aside>
);

export default function App() {
  return (
    <div className="w-[2880px] h-[1800px] overflow-hidden bg-[#0d1117] font-['Inter',sans-serif]">
      <TabStrip />
      <ToolBar />
      <RepoHeader />
      <main className="mx-[224px]">
        <TitleBlock />
        <div className="mt-[64px] flex items-start">
          <div className="w-[1792px] shrink-0">
            <Comment />
            <div className="ml-[145px] w-[3px] h-[32px] bg-[#30363d]" />
            <div className="h-1 bg-[#30363d]" />
            <Editor />
            <div className="ml-[128px] mt-[16px] flex items-center gap-2 text-[24px] text-[#7d8590]">
              <Oct name="info" className="w-8 h-8 text-[#7d8590]" />
              <p>
                Remember, contributions to this repository should follow our{' '}
                <span className="text-[#2f81f7]">GitHub Community Guidelines</span>.
              </p>
            </div>
          </div>
          <Sidebar />
        </div>
      </main>
    </div>
  );
}
